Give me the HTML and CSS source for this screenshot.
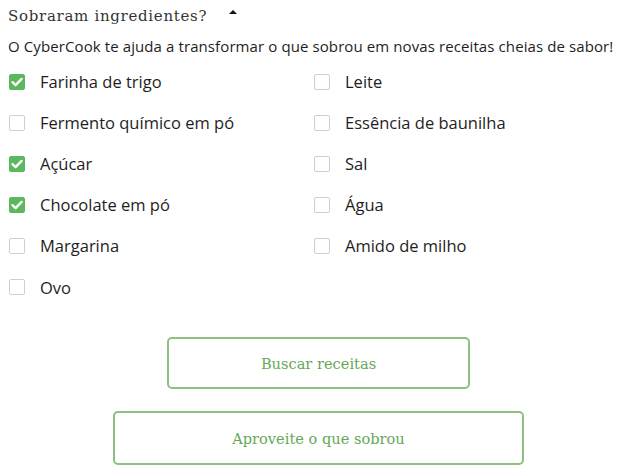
FILE: index.html
```html
<!DOCTYPE html>
<html lang="pt-BR">
<head>
<meta charset="utf-8">
<link rel="stylesheet" href="styles.css">
</head>
<body>
<div class="panel">
  <div class="head">
    <h2 class="title">Sobraram ingredientes?</h2>
    <span class="caret"></span>
  </div>
  <p class="lead">O CyberCook te ajuda a transformar o que sobrou em novas receitas cheias de sabor!</p>
  <ul class="list">
    <li class="item"><span class="box on"><svg viewBox="0 0 16 16" width="16" height="16"><path d="M3.5 8.2 6.6 11.2 12.6 4.9" fill="none" stroke="#fff" stroke-width="2.4" stroke-linecap="round" stroke-linejoin="round"/></svg></span>Farinha de trigo</li>
    <li class="item"><span class="box"></span>Leite</li>
    <li class="item"><span class="box"></span>Fermento químico em pó</li>
    <li class="item"><span class="box"></span>Essência de baunilha</li>
    <li class="item"><span class="box on"><svg viewBox="0 0 16 16" width="16" height="16"><path d="M3.5 8.2 6.6 11.2 12.6 4.9" fill="none" stroke="#fff" stroke-width="2.4" stroke-linecap="round" stroke-linejoin="round"/></svg></span>Açúcar</li>
    <li class="item"><span class="box"></span>Sal</li>
    <li class="item"><span class="box on"><svg viewBox="0 0 16 16" width="16" height="16"><path d="M3.5 8.2 6.6 11.2 12.6 4.9" fill="none" stroke="#fff" stroke-width="2.4" stroke-linecap="round" stroke-linejoin="round"/></svg></span>Chocolate em pó</li>
    <li class="item"><span class="box"></span>Água</li>
    <li class="item"><span class="box"></span>Margarina</li>
    <li class="item"><span class="box"></span>Amido de milho</li>
    <li class="item"><span class="box"></span>Ovo</li>
  </ul>
  <div class="actions">
    <button class="btn btn-search">Buscar receitas</button>
    <button class="btn btn-wide">Aproveite o que sobrou</button>
  </div>
</div>
</body>
</html>
```
FILE: styles.css
```css
html, body {
  margin: 0;
  padding: 0;
  background: #fff;
}
.panel {
  padding: 5px 8px 0 8px;
  width: 623px;
  box-sizing: border-box;
  color: #333;
}
.head {
  display: flex;
  align-items: center;
  gap: 22px;
  height: 22px;
}
.title {
  margin: 0;
  font-family: "DejaVu Serif", serif;
  font-weight: normal;
  font-size: 15px;
  color: #333;
  letter-spacing: 0.7px;
}
.caret {
  width: 0;
  height: 0;
  border-left: 4px solid transparent;
  border-right: 4px solid transparent;
  border-bottom: 4px solid #111;
  margin-top: -8px;
}
.lead {
  margin: 9px 0 0 0;
  font-family: "Open Sans", sans-serif;
  font-size: 15px;
  color: #1e1e1e;
  letter-spacing: 0.1px;
  line-height: 20px;
}
.list {
  list-style: none;
  margin: 5px 0 0 0;
  padding: 0;
  display: grid;
  grid-template-columns: 305px 1fr;
  grid-auto-rows: 41px;
}
.item {
  display: flex;
  align-items: center;
  gap: 15px;
  padding-left: 1px;
  font-family: "Open Sans", sans-serif;
  font-size: 16.5px;
  color: #1e1e1e;
}
.item:nth-child(n+11) {
  margin-top: 1px;
}
.box {
  width: 16px;
  height: 16px;
  box-sizing: border-box;
  border: 1px solid #cfcfcf;
  border-radius: 2px;
  background: #fff;
  flex: none;
  display: flex;
}
.box.on {
  background: #5cb85c;
  border-color: #5cb85c;
}
.box.on svg {
  margin: -1px;
}
.actions {
  display: flex;
  flex-direction: column;
  align-items: center;
  padding-left: 14px;
  gap: 22px;
  margin-top: 30px;
}
.btn {
  background: #fff;
  border: 2px solid #8dc07f;
  border-radius: 5px;
  color: #66a857;
  font-family: "DejaVu Serif", serif;
  font-size: 14.6px;
  cursor: pointer;
}
.btn-search {
  width: 303px;
  height: 52px;
}
.btn-wide {
  width: 411px;
  height: 54px;
}
```
